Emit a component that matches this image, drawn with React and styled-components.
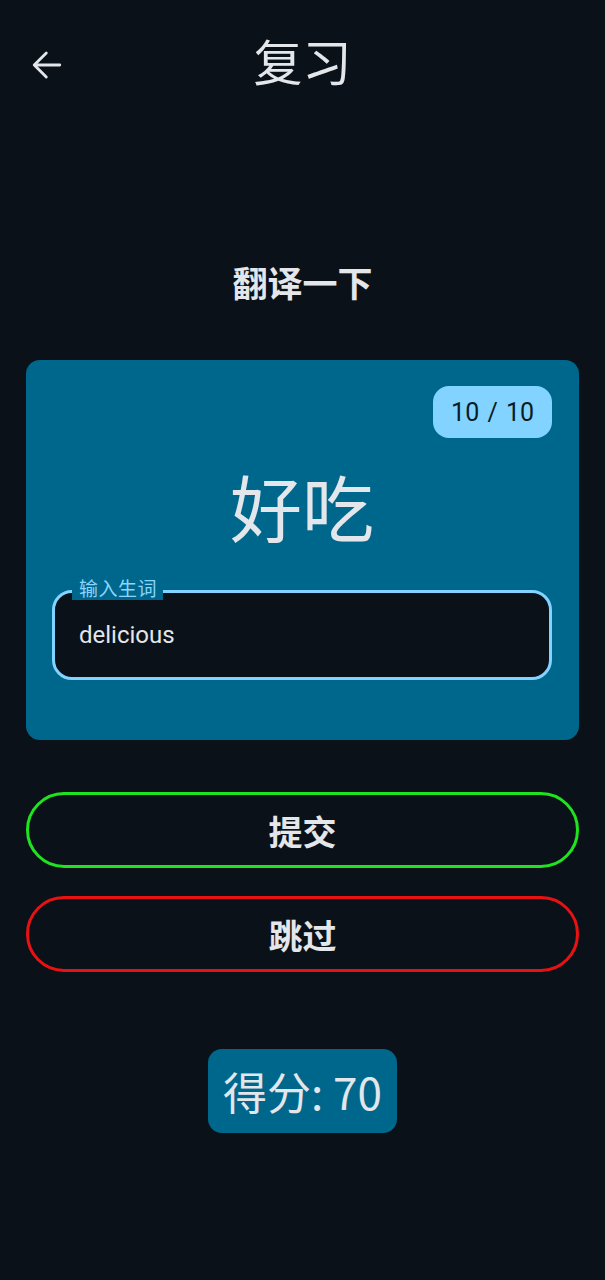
import React from 'react';
import styled, { createGlobalStyle } from 'styled-components';

const GlobalStyle = createGlobalStyle`
  html, body {
    margin: 0;
    padding: 0;
    background: #0b1118;
  }
  body {
    font-family: Roboto, "Noto Sans CJK SC", sans-serif;
    color: #e3e6eb;
  }
`;

const Page = styled.div`
  min-height: 1280px;
  background: #0b1118;
  padding: 0 26px;
  box-sizing: border-box;
  display: flex;
  flex-direction: column;
`;

const Header = styled.header`
  height: 130px;
  display: grid;
  grid-template-columns: 1fr auto 1fr;
  align-items: center;
`;

const BackButton = styled.button`
  justify-self: start;
  width: 40px;
  height: 40px;
  margin-left: 4px;
  padding: 0;
  border: none;
  background: none;
  color: #e3e6eb;
  display: flex;
  align-items: center;
  justify-content: flex-start;
  cursor: pointer;
`;

const Title = styled.h1`
  margin: 0 0 10px;
  font-family: "Noto Sans CJK SC", sans-serif;
  font-weight: 400;
  font-size: 49px;
  line-height: 60px;
  color: #e3e6eb;
`;

const Prompt = styled.h2`
  margin: 130px 0 0;
  text-align: center;
  font-family: "Noto Sans CJK SC", sans-serif;
  font-weight: 700;
  font-size: 35px;
  line-height: 44px;
  color: #e3e6eb;
`;

const Card = styled.section`
  margin-top: 56px;
  background: #00678c;
  border-radius: 14px;
  padding: 26px 27px 60px 26px;
  display: flex;
  flex-direction: column;
`;

const Counter = styled.span`
  align-self: flex-end;
  height: 52px;
  padding: 0 18px;
  display: flex;
  align-items: center;
  background: #82d3ff;
  color: #0b1b26;
  border-radius: 16px;
  font-family: Roboto, sans-serif;
  font-size: 25px;
  word-spacing: 2px;
`;

const Word = styled.div`
  margin-top: 24px;
  text-align: center;
  font-family: "Noto Sans CJK SC", sans-serif;
  font-size: 72px;
  line-height: 86px;
  color: #e3e6eb;
`;

const Field = styled.label`
  position: relative;
  display: block;
  margin-top: 42px;
`;

const FieldLabel = styled.span`
  position: absolute;
  left: 20px;
  top: -14px;
  padding: 0 6px 0 7px;
  background: #00678c;
  color: #8ad6ff;
  font-family: "Noto Sans CJK SC", sans-serif;
  font-size: 19px;
  line-height: 24px;
  letter-spacing: 0.5px;
`;

const Input = styled.input`
  display: block;
  width: 100%;
  height: 90px;
  box-sizing: border-box;
  border: 3px solid #82d3ff;
  border-radius: 20px;
  background: #0b1118;
  color: #e3e6eb;
  padding: 0 24px;
  font-family: Roboto, "Noto Sans CJK SC", sans-serif;
  font-size: 24px;
  outline: none;
`;

const Actions = styled.div`
  margin-top: 52px;
  display: flex;
  flex-direction: column;
  gap: 28px;
`;

const ActionButton = styled.button`
  height: 76px;
  border-radius: 40px;
  border: 3px solid ${(p) => p.$tone};
  background: transparent;
  color: #e3e6eb;
  font-family: "Noto Sans CJK SC", sans-serif;
  font-weight: 700;
  font-size: 34px;
  cursor: pointer;
`;

const Score = styled.div`
  align-self: center;
  margin-top: 77px;
  height: 84px;
  padding: 0 15px;
  display: flex;
  align-items: center;
  background: #00678c;
  border-radius: 14px;
  font-family: "Noto Sans CJK SC", sans-serif;
  font-size: 44px;
  color: #e3e6eb;
`;

const ArrowBack = () => (
  <svg width="34" height="34" viewBox="0 0 24 24" fill="none" stroke="currentColor" strokeWidth="2" strokeLinecap="round" strokeLinejoin="round">
    <path d="M21 12H3.5" />
    <path d="M11.5 3.5L3 12L11.5 20.5" />
  </svg>
);

export default function App() {
  return (
    <>
      <GlobalStyle />
      <Page>
        <Header>
          <BackButton aria-label="返回">
            <ArrowBack />
          </BackButton>
          <Title>复习</Title>
          <span />
        </Header>

        <Prompt>翻译一下</Prompt>

        <Card>
          <Counter>10 / 10</Counter>
          <Word>好吃</Word>
          <Field>
            <FieldLabel>输入生词</FieldLabel>
            <Input defaultValue="delicious" />
          </Field>
        </Card>

        <Actions>
          <ActionButton $tone="#1fe31f">提交</ActionButton>
          <ActionButton $tone="#e81212">跳过</ActionButton>
        </Actions>

        <Score>得分: 70</Score>
      </Page>
    </>
  );
}
